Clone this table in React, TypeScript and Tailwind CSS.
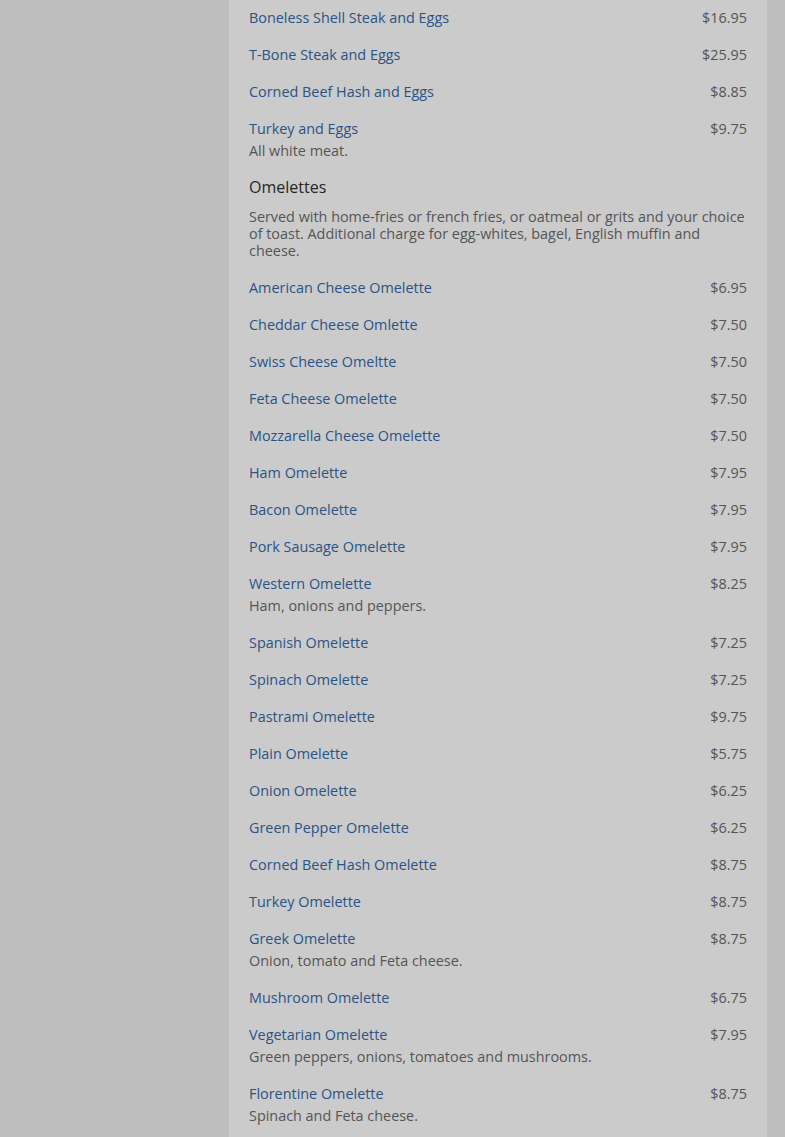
import React from "react";

type Item = { name: string; price: string; desc?: string };

const top: Item[] = [
  { name: "Boneless Shell Steak and Eggs", price: "$16.95" },
  { name: "T-Bone Steak and Eggs", price: "$25.95" },
  { name: "Corned Beef Hash and Eggs", price: "$8.85" },
  { name: "Turkey and Eggs", price: "$9.75", desc: "All white meat." },
];

const omelettes: Item[] = [
  { name: "American Cheese Omelette", price: "$6.95" },
  { name: "Cheddar Cheese Omlette", price: "$7.50" },
  { name: "Swiss Cheese Omeltte", price: "$7.50" },
  { name: "Feta Cheese Omelette", price: "$7.50" },
  { name: "Mozzarella Cheese Omelette", price: "$7.50" },
  { name: "Ham Omelette", price: "$7.95" },
  { name: "Bacon Omelette", price: "$7.95" },
  { name: "Pork Sausage Omelette", price: "$7.95" },
  { name: "Western Omelette", price: "$8.25", desc: "Ham, onions and peppers." },
  { name: "Spanish Omelette", price: "$7.25" },
  { name: "Spinach Omelette", price: "$7.25" },
  { name: "Pastrami Omelette", price: "$9.75" },
  { name: "Plain Omelette", price: "$5.75" },
  { name: "Onion Omelette", price: "$6.25" },
  { name: "Green Pepper Omelette", price: "$6.25" },
  { name: "Corned Beef Hash Omelette", price: "$8.75" },
  { name: "Turkey Omelette", price: "$8.75" },
  { name: "Greek Omelette", price: "$8.75", desc: "Onion, tomato and Feta cheese." },
  { name: "Mushroom Omelette", price: "$6.75" },
  { name: "Vegetarian Omelette", price: "$7.95", desc: "Green peppers, onions, tomatoes and mushrooms." },
  { name: "Florentine Omelette", price: "$8.75", desc: "Spinach and Feta cheese." },
];

function Row({ item }: { item: Item }) {
  return (
    <div className="mb-[15px]">
      <div className="flex justify-between leading-[22px]">
        <a href="#" className="text-[#2a5386] no-underline">{item.name}</a>
        <span className="text-[#555555]">{item.price}</span>
      </div>
      {item.desc && <div className="leading-[22px] text-[#555555]">{item.desc}</div>}
    </div>
  );
}

export default function App() {
  return (
    <div
      className="min-h-screen bg-[#bebebe] text-[14.4px]"
      style={{ fontFamily: '"Open Sans", "Noto Sans", sans-serif' }}
    >
      <div className="ml-[229px] w-[538px] min-h-screen bg-[#cbcbcb] px-5 pt-[7px] pb-4">
        {top.map((it) => (
          <Row key={it.name} item={it} />
        ))}
        <h2 className="-mt-px text-[16px] leading-[22px] text-[#262626] font-normal">Omelettes</h2>
        <p className="mt-[10px] mb-[18px] leading-[17px] text-[#555555]">
          Served with home-fries or french fries, or oatmeal or grits and your choice of toast. Additional charge for egg-whites, bagel, English muffin and cheese.
        </p>
        {omelettes.map((it) => (
          <Row key={it.name} item={it} />
        ))}
      </div>
    </div>
  );
}
